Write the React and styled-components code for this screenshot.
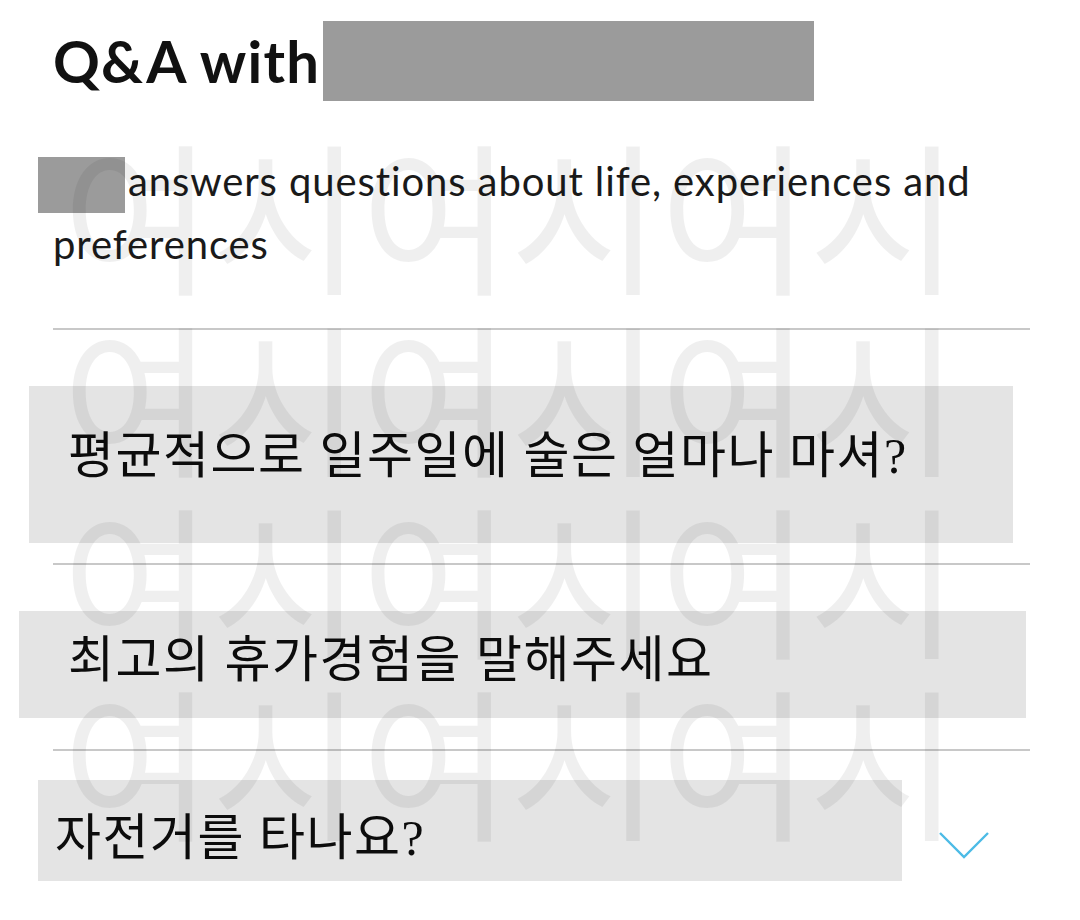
import React from 'react';
import styled, { createGlobalStyle } from 'styled-components';

const GlobalStyle = createGlobalStyle`
  body {
    margin: 0;
    background: #fff;
  }
`;

const Page = styled.div`
  position: relative;
  width: 1080px;
  height: 920px;
  overflow: hidden;
  box-sizing: border-box;
  padding: 21px 50px 0 53px;
  font-family: 'Lato', 'Noto Sans CJK KR', sans-serif;
  color: #111;
`;

const Header = styled.div`
  display: flex;
  align-items: center;
`;

const Title = styled.h1`
  margin: 0;
  font-size: 58px;
  font-weight: 700;
  line-height: 80px;
  letter-spacing: 1.2px;
  white-space: nowrap;
`;

const Redact = styled.span`
  display: inline-block;
  flex: none;
  background: #9b9b9b;
  width: ${(p) => p.w}px;
  height: ${(p) => p.h}px;
`;

const NameRedact = styled(Redact)`
  margin-left: 3px;
`;

const InlineRedact = styled(Redact)`
  margin: 0 3px 0 -15px;
  vertical-align: -17px;
`;

const Subtitle = styled.p`
  margin: 49px 0 0;
  font-size: 40px;
  line-height: 63px;
  font-weight: 400;
  letter-spacing: 0.9px;
  color: #1a1a1a;
`;

const Divider = styled.hr`
  margin: ${(p) => p.top}px 0 0;
  border: 0;
  height: 2px;
  width: 977px;
  background: #c8c8c8;
`;

const Row = styled.div`
  display: flex;
  align-items: flex-start;
  margin-top: ${(p) => p.top}px;
`;

const Question = styled.div`
  box-sizing: border-box;
  flex: none;
  margin-left: ${(p) => p.shift}px;
  width: ${(p) => p.w}px;
  height: ${(p) => p.h}px;
  padding: ${(p) => p.padTop}px 0 0 ${(p) => p.padLeft}px;
  background: #e4e4e4;
  font-family: 'Liberation Serif', 'Noto Sans CJK KR', serif;
  font-size: 50px;
  line-height: 50px;
  letter-spacing: 1.5px;
  color: #0c0c0c;
  white-space: nowrap;
`;

const Chevron = styled.svg`
  flex: none;
  margin: 51px 0 0 36px;
  width: 52px;
  height: 28px;
`;

const Watermark = styled.div`
  position: absolute;
  top: 120px;
  left: 62px;
  z-index: 2;
  pointer-events: none;
  font-family: 'Noto Sans CJK KR', sans-serif;
  font-size: 164px;
  font-weight: 400;
  line-height: 182px;
  letter-spacing: -1.5px;
  color: rgba(0, 0, 0, 0.062);
  white-space: nowrap;
`;

const questions = [
  { text: '평균적으로 일주일에 술은 얼마나 마셔?', top: 56, shift: -24, w: 984, h: 157, padTop: 45, padLeft: 39 },
  { text: '최고의 휴가경험을 말해주세요', top: 46, shift: -34, w: 1007, h: 107, padTop: 24, padLeft: 49 },
  { text: '자전거를 타나요?', top: 29, shift: -15, w: 864, h: 101, padTop: 33, padLeft: 17, toggle: true },
];

const dividerGaps = [20, 31];

const App = () => (
  <>
    <GlobalStyle />
    <Page>
      <Header>
        <Title>Q&amp;A with</Title>
        <NameRedact w={491} h={80} />
      </Header>
      <Subtitle>
        <InlineRedact w={87} h={56} />
        answers questions about life, experiences and preferences
      </Subtitle>
      <Divider top={52} />
      {questions.map((q, i) => (
        <React.Fragment key={q.text}>
          <Row top={q.top}>
            <Question shift={q.shift} w={q.w} h={q.h} padTop={q.padTop} padLeft={q.padLeft}>
              {q.text}
            </Question>
            {q.toggle && (
              <Chevron viewBox="0 0 52 28">
                <polyline points="2,2 26,26 50,2" fill="none" stroke="#4cbbe6" strokeWidth="2.4" />
              </Chevron>
            )}
          </Row>
          {i < dividerGaps.length && <Divider top={dividerGaps[i]} />}
        </React.Fragment>
      ))}
      <Watermark>
        {[0, 1, 2, 3].map((r) => (
          <div key={r}>여시여시여시</div>
        ))}
      </Watermark>
    </Page>
  </>
);

export default App;
